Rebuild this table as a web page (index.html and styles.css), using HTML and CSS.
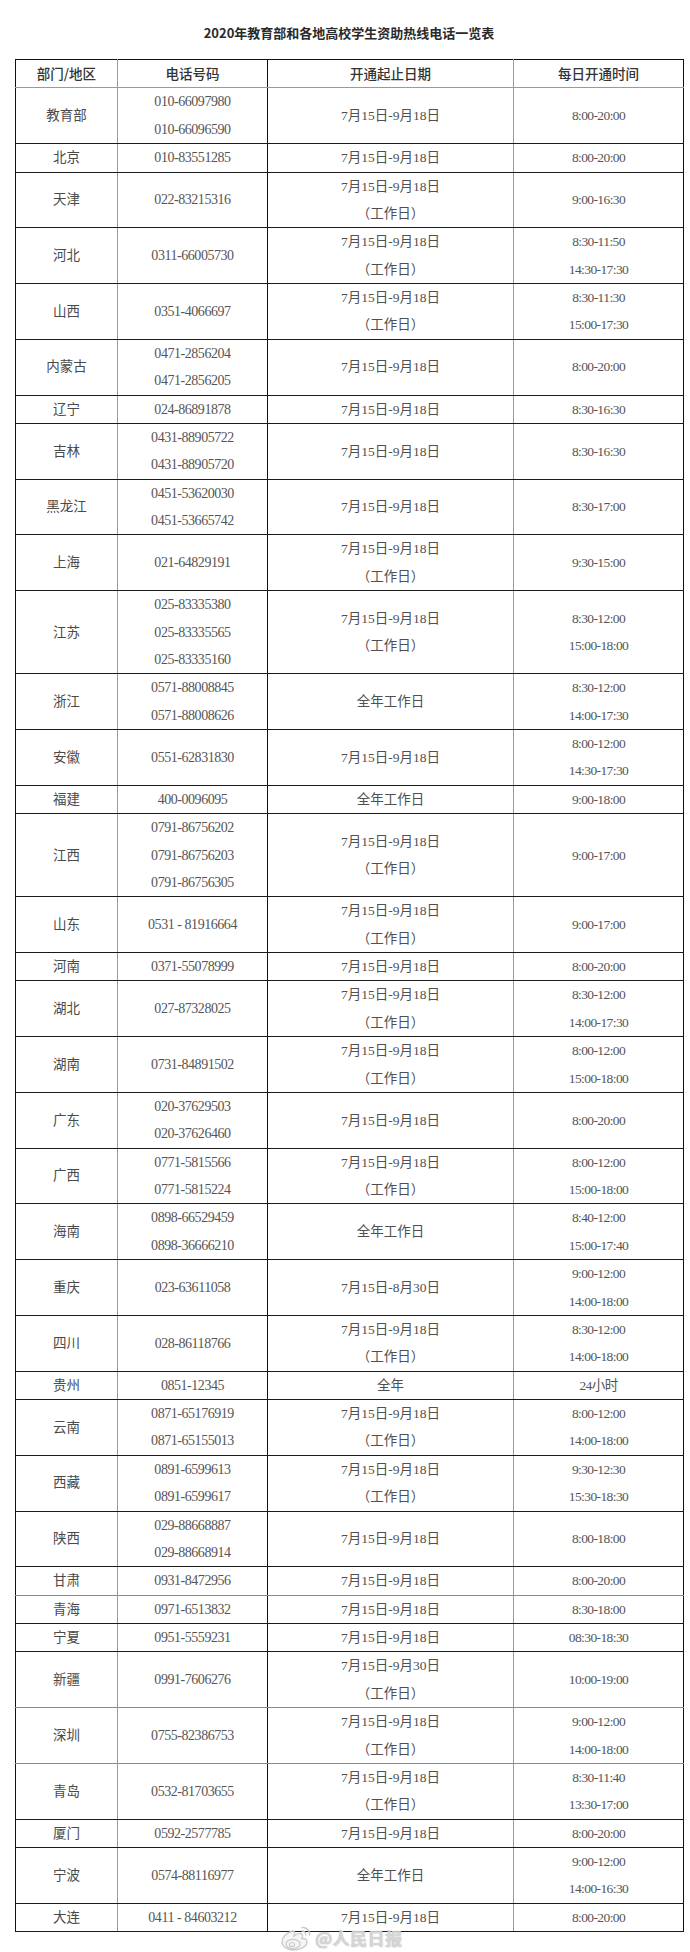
FILE: index.html
```html
<!DOCTYPE html>
<html lang="zh-CN">
<head>
<meta charset="utf-8">
<title>2020年教育部和各地高校学生资助热线电话一览表</title>
<link rel="stylesheet" href="styles.css">
</head>
<body>
<div class="page">
  <h1 class="title">2020年教育部和各地高校学生资助热线电话一览表</h1>
  <table class="hotline">
    <colgroup>
      <col class="w1"><col class="w2"><col class="w3"><col class="w4">
    </colgroup>
    <thead>
      <tr><th class="c1">部门/地区</th><th class="c2">电话号码</th><th class="c3">开通起止日期</th><th class="c4">每日开通时间</th></tr>
    </thead>
    <tbody>
      <tr><td class="c1">教育部</td><td class="c2"><div>010-66097980</div><div>010-66096590</div></td><td class="c3">7月15日-9月18日</td><td class="c4">8:00-20:00</td></tr>
      <tr><td class="c1">北京</td><td class="c2">010-83551285</td><td class="c3">7月15日-9月18日</td><td class="c4">8:00-20:00</td></tr>
      <tr><td class="c1">天津</td><td class="c2">022-83215316</td><td class="c3"><div>7月15日-9月18日</div><div>（工作日）</div></td><td class="c4">9:00-16:30</td></tr>
      <tr><td class="c1">河北</td><td class="c2">0311-66005730</td><td class="c3"><div>7月15日-9月18日</div><div>（工作日）</div></td><td class="c4"><div>8:30-11:50</div><div>14:30-17:30</div></td></tr>
      <tr><td class="c1">山西</td><td class="c2">0351-4066697</td><td class="c3"><div>7月15日-9月18日</div><div>（工作日）</div></td><td class="c4"><div>8:30-11:30</div><div>15:00-17:30</div></td></tr>
      <tr><td class="c1">内蒙古</td><td class="c2"><div>0471-2856204</div><div>0471-2856205</div></td><td class="c3">7月15日-9月18日</td><td class="c4">8:00-20:00</td></tr>
      <tr><td class="c1">辽宁</td><td class="c2">024-86891878</td><td class="c3">7月15日-9月18日</td><td class="c4">8:30-16:30</td></tr>
      <tr><td class="c1">吉林</td><td class="c2"><div>0431-88905722</div><div>0431-88905720</div></td><td class="c3">7月15日-9月18日</td><td class="c4">8:30-16:30</td></tr>
      <tr><td class="c1">黑龙江</td><td class="c2"><div>0451-53620030</div><div>0451-53665742</div></td><td class="c3">7月15日-9月18日</td><td class="c4">8:30-17:00</td></tr>
      <tr><td class="c1">上海</td><td class="c2">021-64829191</td><td class="c3"><div>7月15日-9月18日</div><div>（工作日）</div></td><td class="c4">9:30-15:00</td></tr>
      <tr><td class="c1">江苏</td><td class="c2"><div>025-83335380</div><div>025-83335565</div><div>025-83335160</div></td><td class="c3"><div>7月15日-9月18日</div><div>（工作日）</div></td><td class="c4"><div>8:30-12:00</div><div>15:00-18:00</div></td></tr>
      <tr><td class="c1">浙江</td><td class="c2"><div>0571-88008845</div><div>0571-88008626</div></td><td class="c3">全年工作日</td><td class="c4"><div>8:30-12:00</div><div>14:00-17:30</div></td></tr>
      <tr><td class="c1">安徽</td><td class="c2">0551-62831830</td><td class="c3">7月15日-9月18日</td><td class="c4"><div>8:00-12:00</div><div>14:30-17:30</div></td></tr>
      <tr><td class="c1">福建</td><td class="c2">400-0096095</td><td class="c3">全年工作日</td><td class="c4">9:00-18:00</td></tr>
      <tr><td class="c1">江西</td><td class="c2"><div>0791-86756202</div><div>0791-86756203</div><div>0791-86756305</div></td><td class="c3"><div>7月15日-9月18日</div><div>（工作日）</div></td><td class="c4">9:00-17:00</td></tr>
      <tr><td class="c1">山东</td><td class="c2">0531 - 81916664</td><td class="c3"><div>7月15日-9月18日</div><div>（工作日）</div></td><td class="c4">9:00-17:00</td></tr>
      <tr><td class="c1">河南</td><td class="c2">0371-55078999</td><td class="c3">7月15日-9月18日</td><td class="c4">8:00-20:00</td></tr>
      <tr><td class="c1">湖北</td><td class="c2">027-87328025</td><td class="c3"><div>7月15日-9月18日</div><div>（工作日）</div></td><td class="c4"><div>8:30-12:00</div><div>14:00-17:30</div></td></tr>
      <tr><td class="c1">湖南</td><td class="c2">0731-84891502</td><td class="c3"><div>7月15日-9月18日</div><div>（工作日）</div></td><td class="c4"><div>8:00-12:00</div><div>15:00-18:00</div></td></tr>
      <tr><td class="c1">广东</td><td class="c2"><div>020-37629503</div><div>020-37626460</div></td><td class="c3">7月15日-9月18日</td><td class="c4">8:00-20:00</td></tr>
      <tr><td class="c1">广西</td><td class="c2"><div>0771-5815566</div><div>0771-5815224</div></td><td class="c3"><div>7月15日-9月18日</div><div>（工作日）</div></td><td class="c4"><div>8:00-12:00</div><div>15:00-18:00</div></td></tr>
      <tr><td class="c1">海南</td><td class="c2"><div>0898-66529459</div><div>0898-36666210</div></td><td class="c3">全年工作日</td><td class="c4"><div>8:40-12:00</div><div>15:00-17:40</div></td></tr>
      <tr><td class="c1">重庆</td><td class="c2">023-63611058</td><td class="c3">7月15日-8月30日</td><td class="c4"><div>9:00-12:00</div><div>14:00-18:00</div></td></tr>
      <tr><td class="c1">四川</td><td class="c2">028-86118766</td><td class="c3"><div>7月15日-9月18日</div><div>（工作日）</div></td><td class="c4"><div>8:30-12:00</div><div>14:00-18:00</div></td></tr>
      <tr><td class="c1">贵州</td><td class="c2">0851-12345</td><td class="c3">全年</td><td class="c4">24小时</td></tr>
      <tr><td class="c1">云南</td><td class="c2"><div>0871-65176919</div><div>0871-65155013</div></td><td class="c3"><div>7月15日-9月18日</div><div>（工作日）</div></td><td class="c4"><div>8:00-12:00</div><div>14:00-18:00</div></td></tr>
      <tr><td class="c1">西藏</td><td class="c2"><div>0891-6599613</div><div>0891-6599617</div></td><td class="c3"><div>7月15日-9月18日</div><div>（工作日）</div></td><td class="c4"><div>9:30-12:30</div><div>15:30-18:30</div></td></tr>
      <tr><td class="c1">陕西</td><td class="c2"><div>029-88668887</div><div>029-88668914</div></td><td class="c3">7月15日-9月18日</td><td class="c4">8:00-18:00</td></tr>
      <tr class="light"><td class="c1">甘肃</td><td class="c2">0931-8472956</td><td class="c3">7月15日-9月18日</td><td class="c4">8:00-20:00</td></tr>
      <tr><td class="c1">青海</td><td class="c2">0971-6513832</td><td class="c3">7月15日-9月18日</td><td class="c4">8:30-18:00</td></tr>
      <tr><td class="c1">宁夏</td><td class="c2">0951-5559231</td><td class="c3">7月15日-9月18日</td><td class="c4">08:30-18:30</td></tr>
      <tr class="light"><td class="c1">新疆</td><td class="c2">0991-7606276</td><td class="c3"><div>7月15日-9月30日</div><div>（工作日）</div></td><td class="c4">10:00-19:00</td></tr>
      <tr class="light"><td class="c1">深圳</td><td class="c2">0755-82386753</td><td class="c3"><div>7月15日-9月18日</div><div>（工作日）</div></td><td class="c4"><div>9:00-12:00</div><div>14:00-18:00</div></td></tr>
      <tr><td class="c1">青岛</td><td class="c2">0532-81703655</td><td class="c3"><div>7月15日-9月18日</div><div>（工作日）</div></td><td class="c4"><div>8:30-11:40</div><div>13:30-17:00</div></td></tr>
      <tr><td class="c1">厦门</td><td class="c2">0592-2577785</td><td class="c3">7月15日-9月18日</td><td class="c4">8:00-20:00</td></tr>
      <tr><td class="c1">宁波</td><td class="c2">0574-88116977</td><td class="c3">全年工作日</td><td class="c4"><div>9:00-12:00</div><div>14:00-16:30</div></td></tr>
      <tr><td class="c1">大连</td><td class="c2">0411 - 84603212</td><td class="c3">7月15日-9月18日</td><td class="c4">8:00-20:00</td></tr>
    </tbody>
  </table>
  <div class="watermark">
    <svg class="wb-logo" width="32" height="26" viewBox="0 0 32 26" aria-hidden="true">
      <path d="M13 6 C7 7 2 12 2 17 C2 22 8 25 14 25 C21 25 27 21 27 17 C27 14 24 13 22 13.5 C23 11 23 9 21 8.5 C19 8 16 9.5 14 11 C15 8 15 6 13 6 Z" fill="#f4f4f4" stroke="#c4c4c4" stroke-width="1.3"/>
      <ellipse cx="13" cy="19" rx="7" ry="4.6" fill="none" stroke="#c4c4c4" stroke-width="1.2"/>
      <ellipse cx="12" cy="19.5" rx="2.6" ry="2" fill="none" stroke="#c4c4c4" stroke-width="1.1"/>
      <path d="M22 2.5 C26 2 30 5 29.5 10" fill="none" stroke="#c4c4c4" stroke-width="1.4" stroke-linecap="round"/>
      <path d="M22 6 C24 6 26 7.5 25.8 10" fill="none" stroke="#c4c4c4" stroke-width="1.3" stroke-linecap="round"/>
    </svg>
    <span class="wb-text">@人民日报</span>
  </div>
</div>
</body>
</html>
```
FILE: styles.css
```css
html, body {
  margin: 0;
  padding: 0;
  background: #ffffff;
}

.page {
  position: relative;
  width: 690px;
  height: 1952px;
  overflow: hidden;
}

.title {
  margin: 0 0 0 15px;
  width: 668px;
  padding-top: 19px;
  height: 28px;
  line-height: 28px;
  margin-bottom: 12px;
  text-align: center;
  font-family: "Noto Sans CJK SC", sans-serif;
  font-size: 13px;
  font-weight: 700;
  color: #2a2a2a;
  letter-spacing: 0;
}

.hotline {
  margin-left: 15px;
  width: 668px;
  table-layout: fixed;
  border-collapse: collapse;
  border-spacing: 0;
  font-family: "Liberation Serif", "Noto Sans CJK SC", serif;
  color: #555555;
}

.w1 { width: 102px; }
.w2 { width: 150px; }
.w3 { width: 246px; }
.w4 { width: 170px; }

.hotline th,
.hotline td {
  padding: 0;
  text-align: center;
  vertical-align: middle;
  line-height: 27.37px;
  font-weight: normal;
}

.hotline th {
  font-family: "Noto Sans CJK SC", sans-serif;
  font-size: 13.5px;
  font-weight: 500;
  color: #333333;
  border-top: 1px solid #111111;
  border-bottom: 1px solid #9a9a9a;
}

.hotline td {
  border-bottom: 1px solid #1a1a1a;
}

.hotline tr.light td {
  border-bottom-color: #8a8a8a;
}

.hotline .c1 {
  border-left: 1px solid #111111;
  border-right: 1px solid #9a9a9a;
}

.hotline .c2 {
  border-right: 1px solid #111111;
}

.hotline .c3 {
  border-right: 1px solid #9a9a9a;
}

.hotline .c4 {
  border-right: 1px solid #111111;
}

.hotline td.c1 {
  font-size: 13.5px;
  color: #4a4a4a;
}

.hotline td.c2 {
  font-size: 14px;
  letter-spacing: -0.45px;
}

.hotline td.c3 {
  font-size: 13.5px;
  color: #505050;
}

.hotline td.c4 {
  font-size: 13.5px;
  letter-spacing: -0.6px;
}

.watermark {
  position: absolute;
  left: 280px;
  top: 1925px;
  display: flex;
  align-items: center;
  gap: 3px;
  opacity: 0.9;
}

.wb-logo {
  display: block;
}

.wb-text {
  font-family: "Noto Sans CJK SC", sans-serif;
  font-size: 17px;
  font-weight: 700;
  line-height: 24px;
  color: #d2d2d2;
  text-shadow: 0 0 1px #b0b0b0, 1px 1px 0 #eeeeee;
  letter-spacing: 0.5px;
}
```
